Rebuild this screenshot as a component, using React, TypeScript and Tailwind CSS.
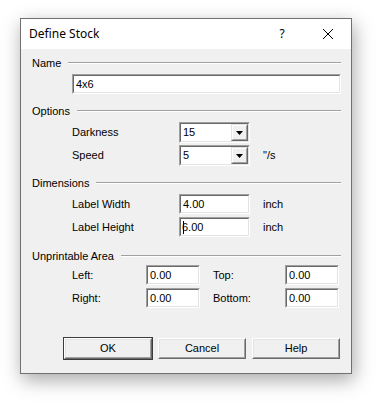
import React from 'react';

const Header = ({ label }: { label: string }) => (
  <div className="flex items-center h-[14px] pl-[11px] pr-[10px]">
    <span>{label}</span>
    <div className="flex-1 ml-[7px] h-0 border-t border-[#a0a0a0] border-b border-b-white" />
  </div>
);

const Edit = ({ value, width, caret }: { value: string; width: string; caret?: boolean }) => (
  <div
    className={`${width} h-[20px] border border-t-[#a0a0a0] border-l-[#a0a0a0] border-b-white border-r-white`}
  >
    <div className="h-full border border-t-[#696969] border-l-[#696969] border-b-[#e3e3e3] border-r-[#e3e3e3] bg-white flex items-center pl-[2px] text-black">
      {caret && <span className="w-px h-[13px] bg-black -mr-[2px]" />}
      <span>{value}</span>
    </div>
  </div>
);

const Combo = ({ value }: { value: string }) => (
  <div className="w-[71px] h-[21px] border border-t-[#a0a0a0] border-l-[#a0a0a0] border-b-white border-r-white">
    <div className="h-full border border-t-[#696969] border-l-[#696969] border-b-[#e3e3e3] border-r-[#e3e3e3] bg-white flex">
      <span className="flex-1 pl-[2px] flex items-center">{value}</span>
      <div className="w-[17px] h-full border border-t-[#e3e3e3] border-l-[#e3e3e3] border-b-[#696969] border-r-[#696969]">
        <div className="h-full border border-t-white border-l-white border-b-[#a0a0a0] border-r-[#a0a0a0] bg-[#f0f0f0] flex items-center justify-center">
          <svg width="7" height="4" viewBox="0 0 7 4">
            <path d="M0 0h7L3.5 4z" fill="#000" />
          </svg>
        </div>
      </div>
    </div>
  </div>
);

const Button = ({ label, primary }: { label: string; primary?: boolean }) => (
  <div className={`w-[90px] h-[23px] border ${primary ? 'border-[#3c3c3c]' : 'border-transparent'}`}>
    <div className="h-full border border-t-white border-l-white border-b-[#696969] border-r-[#696969]">
      <div className="h-full border border-t-[#e3e3e3] border-l-[#e3e3e3] border-b-[#a0a0a0] border-r-[#a0a0a0] bg-[#f0f0f0] flex items-center justify-center">
        {label}
      </div>
    </div>
  </div>
);

export default function App() {
  return (
    <div className="w-[384px] h-[403px] bg-white pl-[20px] pt-[18px]">
      <div className="w-[332px] h-[356px] border border-[#707070] bg-[#f0f0f0] shadow-[2px_6px_18px_rgba(0,0,0,0.35)] flex flex-col">
        <div className="h-[30px] bg-white flex items-center text-[12px] text-black font-['Segoe_UI','Noto_Sans',sans-serif]">
          <span className="pl-[8px] flex-1">Define Stock</span>
          <span className="w-[46px] text-center">?</span>
          <span className="w-[46px] flex justify-center">
            <svg width="10" height="10" viewBox="0 0 10 10">
              <path d="M0 0L10 10M10 0L0 10" stroke="#000" strokeWidth="1" />
            </svg>
          </span>
        </div>

        <div className="flex flex-col font-['Liberation_Sans',Arial,sans-serif] text-[11px] text-black">
          <div className="mt-[7px]">
            <Header label="Name" />
          </div>
          <div className="mt-[4px] pl-[51px]">
            <Edit value="4x6" width="w-[269px]" />
          </div>

          <div className="mt-[10px]">
            <Header label="Options" />
          </div>
          <div className="mt-[4px] flex items-center h-[21px]">
            <span className="w-[158px] pl-[51px]">Darkness</span>
            <Combo value="15" />
          </div>
          <div className="mt-[2px] flex items-center h-[21px]">
            <span className="w-[158px] pl-[51px]">Speed</span>
            <Combo value="5" />
            <span className="ml-[13px]">"/s</span>
          </div>

          <div className="mt-[10px]">
            <Header label="Dimensions" />
          </div>
          <div className="mt-[4px] flex items-center h-[20px]">
            <span className="w-[158px] pl-[51px]">Label Width</span>
            <Edit value="4.00" width="w-[71px]" />
            <span className="ml-[13px]">inch</span>
          </div>
          <div className="mt-[3px] flex items-center h-[20px]">
            <span className="w-[158px] pl-[51px]">Label Height</span>
            <Edit value="6.00" width="w-[71px]" caret />
            <span className="ml-[13px]">inch</span>
          </div>

          <div className="mt-[12px]">
            <Header label="Unprintable Area" />
          </div>
          <div className="mt-[2px] flex items-center h-[20px]">
            <span className="w-[125px] pl-[51px]">Left:</span>
            <Edit value="0.00" width="w-[54px]" />
            <span className="w-[85px] pl-[13px]">Top:</span>
            <Edit value="0.00" width="w-[54px]" />
          </div>
          <div className="mt-[3px] flex items-center h-[20px]">
            <span className="w-[125px] pl-[51px]">Right:</span>
            <Edit value="0.00" width="w-[54px]" />
            <span className="w-[85px] pl-[13px]">Bottom:</span>
            <Edit value="0.00" width="w-[54px]" />
          </div>

          <div className="mt-[29px] flex pl-[42px] gap-[4px]">
            <Button label="OK" primary />
            <Button label="Cancel" />
            <Button label="Help" />
          </div>
        </div>
      </div>
    </div>
  );
}
